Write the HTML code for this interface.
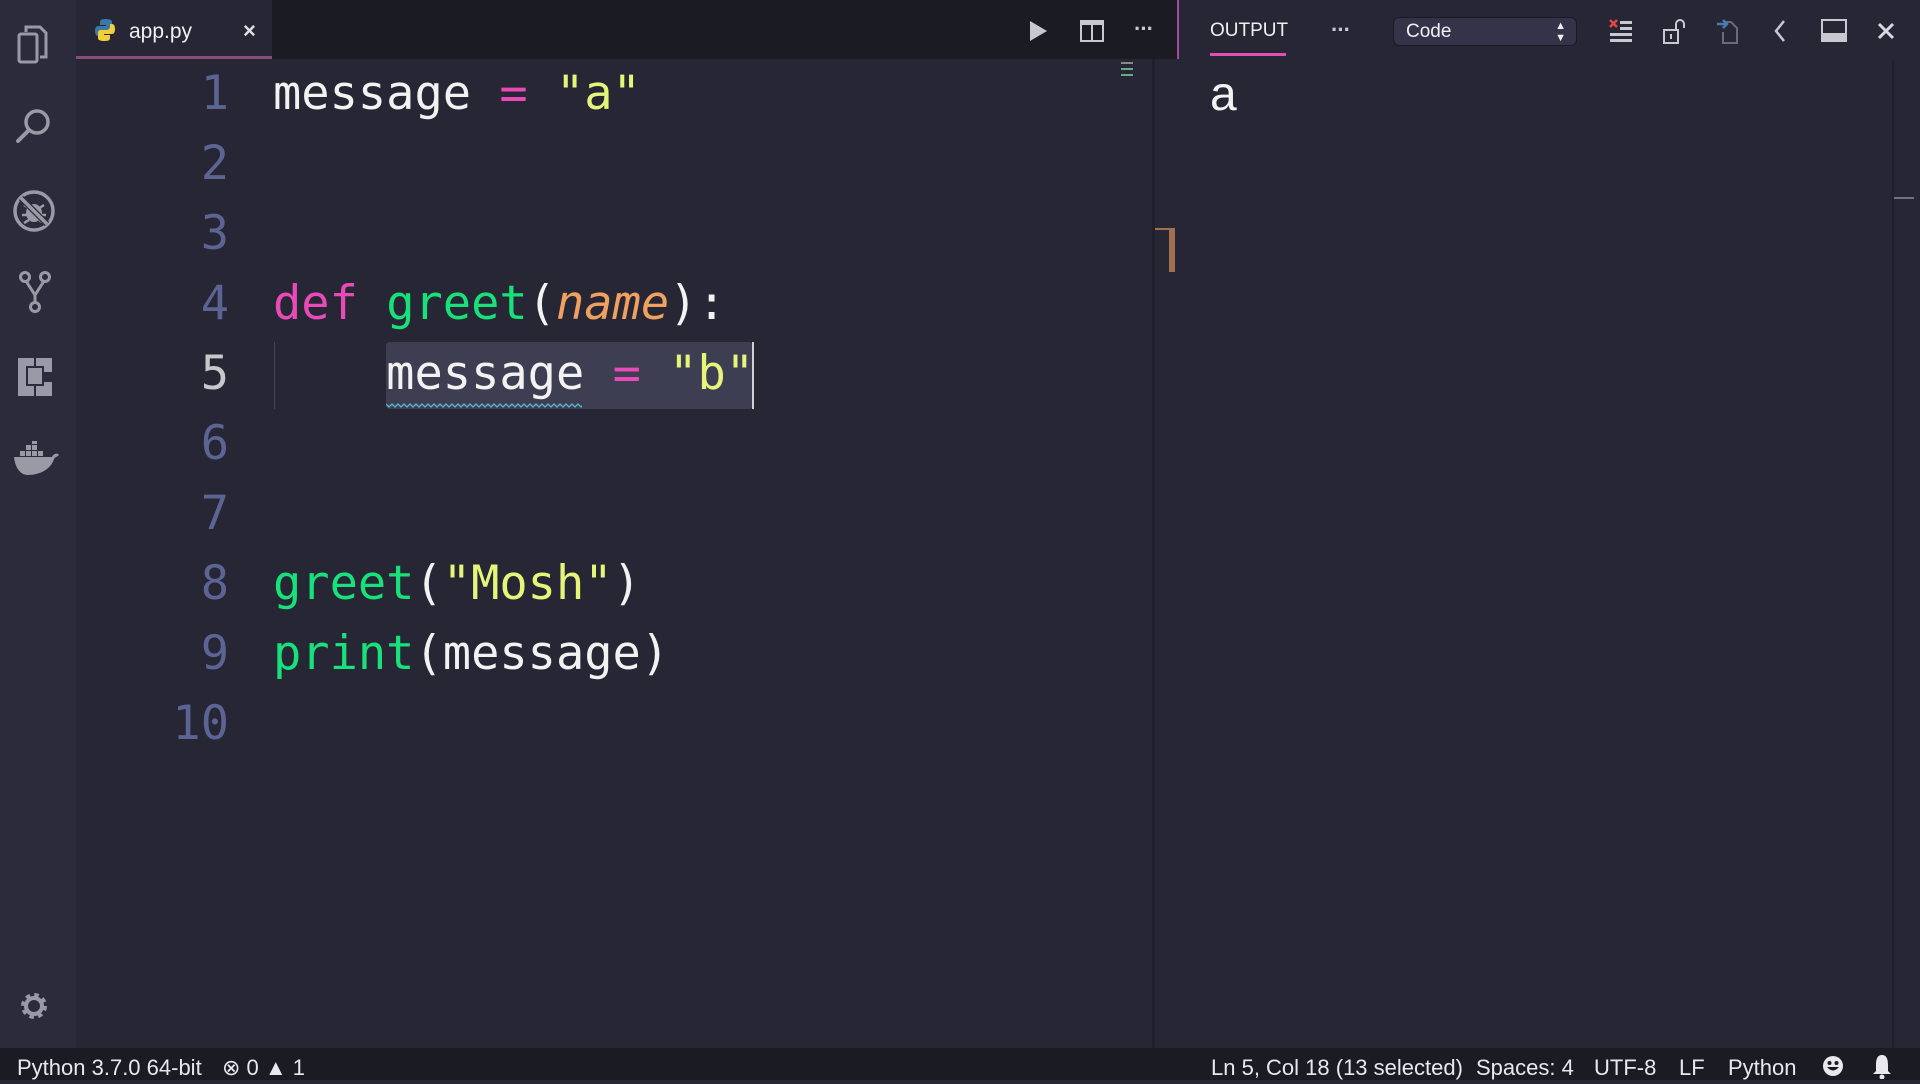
<!DOCTYPE html>
<html><head><meta charset="utf-8"><style>
*{margin:0;padding:0;box-sizing:border-box}
body{width:1920px;height:1080px;background:#262634;overflow:hidden;position:relative;font-family:"Liberation Sans",sans-serif}
.abs{position:absolute}
#act{left:0;top:0;width:76px;height:1048px;background:#2b2b3c}
#tabbar{left:76px;top:0;width:1101px;height:59px;background:#1b1b23}
#tab{left:76px;top:0;width:196px;height:59px;background:#262634;border-bottom:3px solid #8a4a7a}
.code{font-family:"DejaVu Sans Mono","Liberation Mono",monospace;font-size:47px;white-space:pre;line-height:70px;height:70px}
.ln{color:#5c6494;width:229px;text-align:right}
.w{color:#f2f2f2}.p{color:#e84ab8}.g{color:#18e07a}.y{color:#e4f57a}.o{color:#f0a060;font-style:italic}
#status{left:0;top:1048px;width:1920px;height:32px;background:#1b1b23;color:#e8e8ee;font-size:22px;line-height:32px}
.st{position:absolute;top:4px}
svg{position:absolute}
</style></head><body>
<div id="act" class="abs"></div>
<div id="tabbar" class="abs"></div>
<div id="tab" class="abs"></div>
<div class="abs" style="left:1177px;top:0;width:2px;height:59px;background:#a04aa0"></div>
<svg style="left:94px;top:18px" width="22" height="24" viewBox="0 0 22 24"><path d="M11 1c-5 0-5 2-5 3v3h6v1H4c-2 0-3 2-3 5s1 5 3 5h2v-3c0-2 2-3 4-3h5c2 0 3-1 3-3V4c0-2-2-3-7-3z" fill="#3b77a8"/><path d="M11 23c5 0 5-2 5-3v-3h-6v-1h8c2 0 3-2 3-5s-1-5-3-5h-2v3c0 2-2 3-4 3H7c-2 0-3 1-3 3v5c0 2 2 3 7 3z" fill="#f2cf3a"/></svg>
<div class="abs" style="left:129px;top:20px;color:#f0f0f0;font-size:21px">app.py</div>
<div class="abs" style="left:243px;top:18px;color:#e0e0e0;font-size:22px;font-weight:bold">×</div>
<svg style="left:1028px;top:20px" width="20" height="22"><path d="M2 1L19 11L2 21Z" fill="#c8c8d0"/></svg>
<svg style="left:1080px;top:20px" width="24" height="22"><rect x="1" y="1" width="22" height="20" fill="none" stroke="#c8c8d0" stroke-width="2"/><rect x="1" y="1" width="22" height="4" fill="#c8c8d0"/><line x1="12" y1="1" x2="12" y2="21" stroke="#c8c8d0" stroke-width="2"/></svg>
<div class="abs" style="left:1134px;top:16px;color:#c8c8d0;font-size:22px;font-weight:bold;letter-spacing:-1px">···</div>
<svg style="left:16px;top:22px" width="36" height="44" viewBox="0 0 36 44"><rect x="3" y="12" width="18" height="28" rx="2" fill="none" stroke="#9a9aa6" stroke-width="3"/><path d="M10 10V5h14l6 6v24h-6" fill="none" stroke="#9a9aa6" stroke-width="3"/></svg>
<svg style="left:14px;top:106px" width="40" height="40" viewBox="0 0 40 40"><circle cx="23" cy="16" r="11" fill="none" stroke="#9a9aa6" stroke-width="3.5"/><line x1="15" y1="24" x2="4" y2="35" stroke="#9a9aa6" stroke-width="4" stroke-linecap="round"/></svg>
<svg style="left:12px;top:189px" width="44" height="44" viewBox="0 0 44 44"><circle cx="22" cy="22" r="19" fill="none" stroke="#9a9aa6" stroke-width="3.5"/><ellipse cx="22" cy="24" rx="8" ry="9" fill="#9a9aa6"/><path d="M12 16l6 4M32 16l-6 4M10 26h6M34 26h-6M12 34l5-3M32 34l-5-3" stroke="#9a9aa6" stroke-width="2.5"/><line x1="9" y1="9" x2="35" y2="35" stroke="#2b2b3c" stroke-width="6"/><line x1="9" y1="9" x2="35" y2="35" stroke="#9a9aa6" stroke-width="3.5"/></svg>
<svg style="left:18px;top:270px" width="34" height="44" viewBox="0 0 34 44"><circle cx="7" cy="7" r="4.5" fill="none" stroke="#9a9aa6" stroke-width="3"/><circle cx="27" cy="7" r="4.5" fill="none" stroke="#9a9aa6" stroke-width="3"/><circle cx="17" cy="37" r="4.5" fill="none" stroke="#9a9aa6" stroke-width="3"/><path d="M8 11l9 14 9-14M17 25v8" fill="none" stroke="#9a9aa6" stroke-width="3"/></svg>
<svg style="left:17px;top:357px" width="36" height="40" viewBox="0 0 36 40"><path d="M1 1h16v8H9v20h8v10H1zM19 1h16v14h-8V9h-8zM27 25h8v14H19v-10h8z" fill="#9a9aa6"/><rect x="11" y="11" width="14" height="16" fill="#9a9aa6"/></svg>
<svg style="left:12px;top:441px" width="48" height="36" viewBox="0 0 48 36"><path d="M2 16h38c2-4 6-4 7-2-2 2-4 2-5 4-3 10-14 16-26 16C8 34 3 26 2 16z" fill="#9a9aa6"/><g fill="#9a9aa6"><rect x="8" y="10" width="5" height="5"/><rect x="14" y="10" width="5" height="5"/><rect x="20" y="10" width="5" height="5"/><rect x="26" y="10" width="5" height="5"/><rect x="14" y="4" width="5" height="5"/><rect x="20" y="4" width="5" height="5"/><rect x="20" y="-2" width="5" height="5"/></g></svg>
<svg style="left:18px;top:990px" width="32" height="32" viewBox="0 0 32 32"><circle cx="16" cy="16" r="10" fill="none" stroke="#9a9aa6" stroke-width="6" stroke-dasharray="4 3.85"/><circle cx="16" cy="16" r="8" fill="none" stroke="#9a9aa6" stroke-width="4"/></svg>
<div class="abs" style="left:386px;top:342px;width:367px;height:67px;background:#3e3e52;border-radius:4px"></div>
<div class="abs" style="left:752px;top:342px;width:2px;height:67px;background:#d0d0d0"></div>
<div class="abs" style="left:274px;top:342px;width:1px;height:67px;background:#44445a"></div>
<svg style="left:386px;top:402px" width="196" height="8"><path d="M0 2 l3 3 3-3 3 3 3-3 3 3 3-3 3 3 3-3 3 3 3-3 3 3 3-3 3 3 3-3 3 3 3-3 3 3 3-3 3 3 3-3 3 3 3-3 3 3 3-3 3 3 3-3 3 3 3-3 3 3 3-3 3 3 3-3 3 3 3-3 3 3 3-3 3 3 3-3 3 3 3-3 3 3 3-3 3 3 3-3 3 3 3-3 3 3 3-3 3 3 3-3 3 3 3-3 3 3 3-3 3 3 3-3 3 3 3-3 3 3 3-3 3 3 3-3 3 3 3-3 3 3 3-3 3 3" fill="none" stroke="#5ab8d0" stroke-width="1.3"/></svg>
<div class="abs" style="left:0;top:59px">
<div class="code" style="display:flex"><div class="ln">1</div><div style="width:44px"></div><span class="w">message <span class="p">=</span> <span class="y">"a"</span></span></div>
<div class="code" style="display:flex"><div class="ln">2</div></div>
<div class="code" style="display:flex"><div class="ln">3</div></div>
<div class="code" style="display:flex"><div class="ln">4</div><div style="width:44px"></div><span><span class="p">def</span> <span class="g">greet</span><span class="w">(</span><span class="o">name</span><span class="w">):</span></span></div>
<div class="code" style="display:flex"><div class="ln" style="color:#c8c8cc">5</div><div style="width:44px"></div><span class="w">    message <span class="p">=</span> <span class="y">"b"</span></span></div>
<div class="code" style="display:flex"><div class="ln">6</div></div>
<div class="code" style="display:flex"><div class="ln">7</div></div>
<div class="code" style="display:flex"><div class="ln">8</div><div style="width:44px"></div><span><span class="g">greet</span><span class="w">(</span><span class="y">"Mosh"</span><span class="w">)</span></span></div>
<div class="code" style="display:flex"><div class="ln">9</div><div style="width:44px"></div><span><span class="g">print</span><span class="w">(message)</span></span></div>
<div class="code" style="display:flex"><div class="ln">10</div></div>
</div>
<div class="abs" style="left:1121px;top:62px;width:12px;height:2px;background:#888"></div>
<div class="abs" style="left:1121px;top:68px;width:12px;height:2px;background:#6a8"></div>
<div class="abs" style="left:1121px;top:74px;width:12px;height:2px;background:#6a8"></div>
<div class="abs" style="left:1152px;top:59px;width:3px;height:989px;background:#20202c"></div>
<div class="abs" style="left:1155px;top:228px;width:20px;height:2px;background:#a07050"></div>
<div class="abs" style="left:1169px;top:228px;width:6px;height:44px;background:#a07050"></div>
<div class="abs" style="left:1210px;top:20px;color:#f0f0f0;font-size:19px">OUTPUT</div>
<div class="abs" style="left:1210px;top:53px;width:76px;height:3px;background:#e050b0"></div>
<div class="abs" style="left:1331px;top:17px;color:#c8c8d0;font-size:22px;font-weight:bold;letter-spacing:-1px">···</div>
<div class="abs" style="left:1393px;top:17px;width:184px;height:29px;background:#33334a;border:1px solid #1a1a24;border-radius:6px;color:#f0f0f0;font-size:19px;line-height:27px;padding-left:12px">Code<span style="position:absolute;right:10px;font-size:11px;line-height:12px;top:2px">▲<br>▼</span></div>
<svg style="left:1608px;top:18px" width="26" height="26"><path d="M2 2l7 7M9 2l-7 7" stroke="#e04848" stroke-width="2.5"/><rect x="12" y="3" width="12" height="3" fill="#c8c8d0"/><rect x="12" y="9" width="12" height="3" fill="#c8c8d0"/><rect x="2" y="15" width="22" height="3" fill="#c8c8d0"/><rect x="2" y="21" width="22" height="3" fill="#c8c8d0"/></svg>
<svg style="left:1662px;top:18px" width="26" height="26"><rect x="2" y="12" width="14" height="13" fill="none" stroke="#c8c8d0" stroke-width="2"/><path d="M14 12V6a4 4 0 0 1 8 0v4" fill="none" stroke="#c8c8d0" stroke-width="2"/><line x1="9" y1="16" x2="9" y2="21" stroke="#c8c8d0" stroke-width="2"/></svg>
<svg style="left:1715px;top:18px" width="26" height="26"><path d="M10 4h6l6 6v15H8V14" fill="none" stroke="#6a6a78" stroke-width="2"/><path d="M2 6h10M8 2l4 4-4 4" fill="none" stroke="#4a78b0" stroke-width="2.5"/></svg>
<svg style="left:1772px;top:19px" width="16" height="24"><path d="M12 2L4 12l8 10" fill="none" stroke="#c8c8d0" stroke-width="2.5"/></svg>
<svg style="left:1821px;top:19px" width="26" height="24"><rect x="1" y="1" width="24" height="21" fill="none" stroke="#c8c8d0" stroke-width="2"/><rect x="1" y="14" width="24" height="8" fill="#c8c8d0"/></svg>
<svg style="left:1876px;top:21px" width="20" height="20"><path d="M3 3l14 14M17 3L3 17" stroke="#d8d8e0" stroke-width="3"/></svg>
<div class="abs" style="left:1210px;top:67px;color:#f2f2f2;font-size:48px;font-family:'Liberation Sans',sans-serif">a</div>
<div class="abs" style="left:1892px;top:59px;width:2px;height:989px;background:#20202c"></div>
<div class="abs" style="left:1894px;top:197px;width:20px;height:2px;background:#707080"></div>
<div id="status" class="abs">
<span class="st" style="left:17px">Python 3.7.0 64-bit</span>
<span class="st" style="left:222px">⊗ 0 ▲ 1</span>
<span class="st" style="left:1211px">Ln 5, Col 18 (13 selected)</span>
<span class="st" style="left:1476px">Spaces: 4</span>
<span class="st" style="left:1594px">UTF-8</span>
<span class="st" style="left:1679px">LF</span>
<span class="st" style="left:1728px">Python</span>
<svg style="left:1822px;top:7px" width="22" height="22"><circle cx="11" cy="11" r="10" fill="#e8e8ee"/><circle cx="7.5" cy="8" r="2" fill="#1b1b23"/><circle cx="14.5" cy="8" r="2" fill="#1b1b23"/><path d="M5 12q6 7 12 0" fill="#1b1b23"/></svg>
<svg style="left:1871px;top:5px" width="22" height="26"><path d="M11 2c-5 0-6 5-6 10v6l-3 3h18l-3-3v-6c0-5-1-10-6-10z" fill="#e8e8ee"/><circle cx="11" cy="24" r="2.5" fill="#e8e8ee"/></svg>
</div>
</body></html>
